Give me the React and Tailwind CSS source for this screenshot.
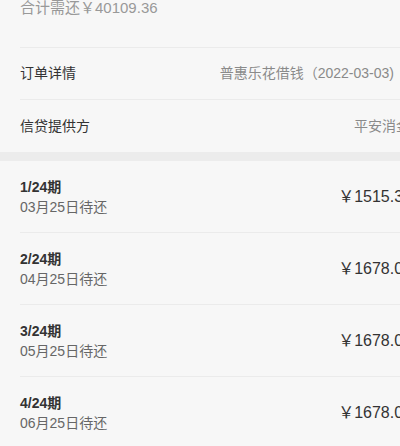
export default function App() {
  const font = { fontFamily: '"Liberation Sans", "Noto Sans CJK SC", sans-serif' };
  const rows = [
    ["1/24期", "03月25日待还", "￥1515.36"],
    ["2/24期", "04月25日待还", "￥1678.00"],
    ["3/24期", "05月25日待还", "￥1678.00"],
    ["4/24期", "06月25日待还", "￥1678.00"],
  ];
  return (
    <div className="w-[400px] h-[446px] overflow-hidden bg-[#f7f7f7]" style={font}>
      <div className="w-[432px]">
        <div className="h-[47px] pl-[20px]">
          <div className="text-[15px] leading-[16px] text-[#999]">合计需还￥40109.36</div>
        </div>
        <div className="ml-[20px] border-t border-[#ebebeb]">
          <div className="h-[52px] flex items-center justify-between pr-[20px] border-b border-[#ebebeb]">
            <span className="text-[14px] text-[#333]">订单详情</span>
            <span className="flex items-center gap-[4px] text-[14px] text-[#8a8a8a]">
              普惠乐花借钱（2022-03-03)
              <svg width="14" height="14" viewBox="0 0 24 24" fill="none" stroke="#bbb" strokeWidth="2">
                <path d="M9 5l7 7-7 7" />
              </svg>
            </span>
          </div>
          <div className="h-[52px] flex items-center justify-between pr-[22px]">
            <span className="text-[14px] text-[#333]">信贷提供方</span>
            <span className="text-[14px] text-[#8a8a8a]">平安消金</span>
          </div>
        </div>
        <div className="h-[9px] bg-[#ececec]" />
        <div className="ml-[20px]">
          {rows.map(([t, d, a], i) => (
            <div
              key={i}
              className={`h-[72px] flex items-center justify-between pr-[20px] ${i < rows.length - 1 ? "border-b border-[#ebebeb]" : ""}`}
            >
              <div className="flex flex-col">
                <span className="text-[14px] leading-[20px] font-bold text-[#333]">{t}</span>
                <span className="text-[14px] leading-[20px] text-[#666]">{d}</span>
              </div>
              <span className="text-[16px] text-[#333]">{a}</span>
            </div>
          ))}
        </div>
      </div>
    </div>
  );
}
